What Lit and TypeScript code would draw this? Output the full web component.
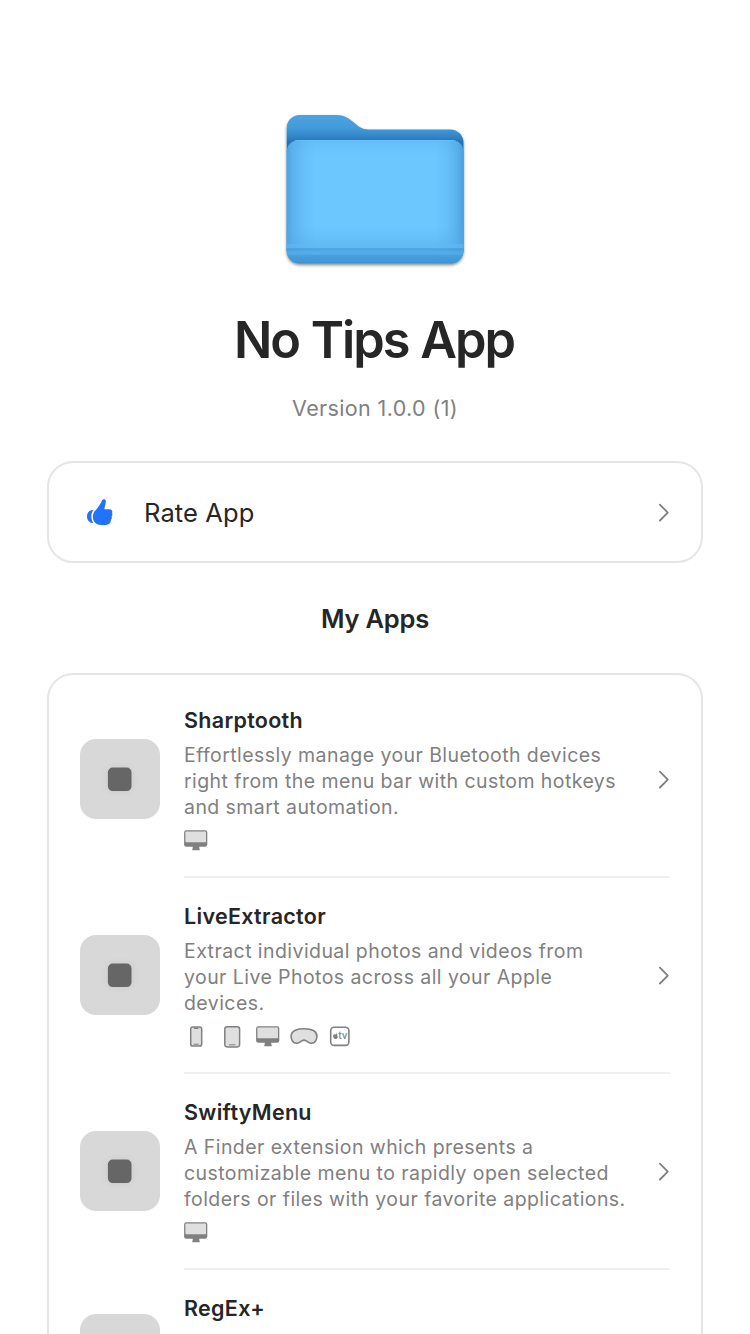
import { LitElement, html, css, svg, nothing } from "lit";
import { customElement, property } from "lit/decorators.js";

type Device = "phone" | "tablet" | "mac" | "vision" | "tv";

interface AppInfo {
  name: string;
  about: string[];
  devices: Device[];
}

const APPS: AppInfo[] = [
  {
    name: "Sharptooth",
    about: [
      "Effortlessly manage your Bluetooth devices",
      "right from the menu bar with custom hotkeys",
      "and smart automation.",
    ],
    devices: ["mac"],
  },
  {
    name: "LiveExtractor",
    about: [
      "Extract individual photos and videos from",
      "your Live Photos across all your Apple",
      "devices.",
    ],
    devices: ["phone", "tablet", "mac", "vision", "tv"],
  },
  {
    name: "SwiftyMenu",
    about: [
      "A Finder extension which presents a",
      "customizable menu to rapidly open selected",
      "folders or files with your favorite applications.",
    ],
    devices: ["mac"],
  },
  { name: "RegEx+", about: [], devices: [] },
];

@customElement("chevron-icon")
export class ChevronIcon extends LitElement {
  static styles = css`
    :host { display: block; width: 12px; height: 20px; flex: none; }
    .glyph { display: block; }
  `;
  render() {
    return html`<svg class="glyph" width="12" height="20" viewBox="0 0 12 20" fill="none"
      stroke="#808080" stroke-width="1.8" stroke-linecap="round" stroke-linejoin="round">
      <path d="M1.900 2.700 L9.800 10.600 L1.900 18.500" />
    </svg>`;
  }
}

@customElement("folder-icon")
export class FolderIcon extends LitElement {
  static styles = css`
    :host { display: block; width: 200px; height: 170px; }
    .glyph { display: block; }
  `;
  render() {
    return html`<svg class="glyph" width="200" height="170" viewBox="275 105 200 170">
      <defs>
        <linearGradient id="back" x1="0" y1="115" x2="0" y2="142" gradientUnits="userSpaceOnUse">
          <stop offset="0" stop-color="#4ba3e0" />
          <stop offset=".5" stop-color="#429ada" />
          <stop offset=".75" stop-color="#348aca" />
          <stop offset="1" stop-color="#2672b9" />
        </linearGradient>
        <linearGradient id="side" x1="286.7" y1="0" x2="463.5" y2="0" gradientUnits="userSpaceOnUse">
          <stop offset="0" stop-color="#4ba5e3" />
          <stop offset=".035" stop-color="#5ab3ef" />
          <stop offset=".1" stop-color="#66c0fa" />
          <stop offset=".17" stop-color="#6cc6ff" />
          <stop offset=".84" stop-color="#6cc6ff" />
          <stop offset=".91" stop-color="#65bff9" />
          <stop offset=".965" stop-color="#58b1ed" />
          <stop offset="1" stop-color="#48a1df" />
        </linearGradient>
        <linearGradient id="fall" x1="0" y1="140" x2="0" y2="263.5" gradientUnits="userSpaceOnUse">
          <stop offset="0" stop-color="#4faae6" stop-opacity=".3" />
          <stop offset=".12" stop-color="#4faae6" stop-opacity="0" />
          <stop offset=".7" stop-color="#4faae6" stop-opacity="0" />
          <stop offset=".84" stop-color="#4faae6" stop-opacity=".35" />
          <stop offset="1" stop-color="#4faae6" stop-opacity=".45" />
        </linearGradient>
        <linearGradient id="foot" x1="0" y1="254.5" x2="0" y2="263.5" gradientUnits="userSpaceOnUse">
          <stop offset="0" stop-color="#48a0dc" />
          <stop offset="1" stop-color="#3d94d3" />
        </linearGradient>
        <clipPath id="front">
          <path d="M298.700 140H451.500A12 12 0 0 1 463.500 152V250.500A13 13 0 0 1 450.500 263.500H299.700A13 13 0 0 1 286.700 250.500V152A12 12 0 0 1 298.700 140Z" />
        </clipPath>
        <filter id="shade" x="-10%" y="-10%" width="120%" height="125%">
          <feDropShadow dx="0" dy="1.6" stdDeviation="1.5" flood-color="#000" flood-opacity=".48" />
        </filter>
      </defs>
      <g filter="url(#shade)">
        <path fill="url(#back)" d="M299.700 115H337C344 115 348.500 118 353 121.800C358 126.300 362 129.500 369 129.500H450.500A13 13 0 0 1 463.500 142.500V250.500A13 13 0 0 1 450.500 263.500H299.700A13 13 0 0 1 286.700 250.500V128A13 13 0 0 1 299.700 115Z" />
      </g>
      <g clip-path="url(#front)">
        <rect x="286" y="139" width="178" height="126" fill="url(#side)" />
        <rect x="286" y="139" width="178" height="126" fill="url(#fall)" />
        <rect x="286" y="140" width="178" height="1" fill="#6bc2f9" opacity=".8" />
        <rect x="286" y="244" width="178" height="4" fill="#62b8f1" opacity=".6" />
        <rect x="286" y="248" width="178" height="3" fill="#469edd" opacity=".7" />
        <rect x="286" y="251" width="178" height="4" fill="#51a9e5" opacity=".8" />
        <rect x="286" y="254.700" width="178" height="9" fill="url(#foot)" />
      </g>
    </svg>`;
  }
}

const deviceShapes = {
  phone: svg`<rect x="6.700" y="2.900" width="11" height="19.200" rx="2.200" fill="#dfdfdf" stroke="#808080" stroke-width="1.500"/>
    <path d="M10.500 4.300H13.900" stroke="#808080" stroke-width="1.300" stroke-linecap="round"/>
    <path d="M10.100 20.200H14.300" stroke="#808080" stroke-width="1" stroke-linecap="round"/>`,
  tablet: svg`<rect x="4.800" y="2.700" width="14.800" height="20.200" rx="2.300" fill="#dfdfdf" stroke="#808080" stroke-width="1.500"/>
    <path d="M9.500 20.800H15" stroke="#808080" stroke-width="1" stroke-linecap="round"/>`,
  mac: svg`<path d="M9 18H15L15.800 22.200H8.200Z" fill="#808080"/>
    <rect x=".1" y="2.200" width="23.200" height="16.600" rx="2.200" fill="#808080"/>
    <rect x="1.400" y="3.500" width="20.600" height="10.800" rx=".8" fill="#dfdfdf"/>`,
  vision: svg`<path d="M14 4.800C20 4.800 26.900 5.900 26.900 12.300C26.900 16.200 24.700 19.300 21.600 19.300C18.300 19.300 16.700 16.100 14 16.100C11.300 16.100 9.700 19.300 6.400 19.300C3.300 19.300 1.100 16.200 1.100 12.300C1.100 5.900 8 4.800 14 4.800Z" fill="#dfdfdf" stroke="#808080" stroke-width="1.600"/>`,
  tv: svg`<rect x="2.700" y="3.200" width="18.200" height="18.200" rx="3.400" fill="#fff" stroke="#808080" stroke-width="1.600"/>
    <path d="M7.700 9.800Q7.800 8.700 8.800 8.400Q8.800 9.500 7.700 9.800ZM7.500 10.400Q8.500 9.600 9.700 10.500Q8.500 11.700 9.900 13.100Q8.900 15.500 7.600 14.900Q6.100 15.500 5.300 13.200Q4.500 9.600 7.500 10.400Z" fill="#808080"/>
    <text x="10.600" y="15.200" font-family="Inter, sans-serif" font-size="9.500" fill="#808080" stroke="#808080" stroke-width=".2">tv</text>`,
};

@customElement("device-icon")
export class DeviceIcon extends LitElement {
  @property() kind: Device = "mac";
  static styles = css`
    :host { display: block; height: 24px; }
    .glyph { display: block; }
  `;
  render() {
    const w = this.kind === "vision" ? 28 : 24;
    return html`<svg class="glyph" width=${w} height="24" viewBox="0 0 ${w} 24">${deviceShapes[this.kind]}</svg>`;
  }
}

@customElement("app-row")
export class AppRow extends LitElement {
  @property({ attribute: false }) app!: AppInfo;
  static styles = css`
    :host { display: flex; align-items: stretch; padding: 0 31px; gap: 24px; }
    .art {
      flex: none; align-self: center; width: 80px; height: 80px; margin-bottom: 2px;
      border-radius: 16px; background: #d8d8d8;
    }
    .mark { display: block; }
    .body {
      flex: 1; display: flex; align-items: center; justify-content: space-between;
      padding: 24px 0; border-bottom: 2px solid #f0f0f0;
    }
    .text { display: flex; flex-direction: column; }
    .name {
      font-size: 21.5px; line-height: 28px; font-weight: 580;
      letter-spacing: 0.3px; color: #262626; white-space: nowrap;
    }
    .about {
      margin-top: 8px; min-height: 52px; font-size: 19.5px; line-height: 26px;
      letter-spacing: 0.43px; color: #808080;
    }
    .line { white-space: nowrap; }
    .devices { display: flex; gap: 12px; height: 24px; margin-top: 8px; }
    .vision { margin: 0 -2px; }
  `;
  render() {
    const { name, about, devices } = this.app;
    return html`
      <div class="art">
        <svg class="mark" width="80" height="80" viewBox="0 0 80 80">
          <defs>
            <filter id="halo" x="-60%" y="-60%" width="220%" height="220%">
              <feDropShadow dx="0" dy="0" stdDeviation="3" flood-color="#000" flood-opacity=".08" />
            </filter>
          </defs>
          <rect x="27.900" y="28.500" width="23.600" height="23.600" rx="4.800" fill="#666" filter="url(#halo)" />
        </svg>
      </div>
      <div class="body">
        <div class="text">
          <div class="name">${name}</div>
          <div class="about">${about.map((l) => html`<div class="line">${l}</div>`)}</div>
          <div class="devices">
            ${devices.map((d) => html`<device-icon class=${d === "vision" ? "vision" : nothing} .kind=${d}></device-icon>`)}
          </div>
        </div>
        <chevron-icon></chevron-icon>
      </div>`;
  }
}

@customElement("app-root")
export class AppRoot extends LitElement {
  static styles = css`
    :host {
      display: flex; flex-direction: column; align-items: center;
      box-sizing: border-box; width: 750px; height: 1334px; overflow: hidden;
      padding-top: 105px; background: #fff; color: #262626;
      font-family: Inter, "Liberation Sans", sans-serif;
    }
    .title {
      margin: 33px 0 0; font-size: 50.5px; line-height: 64px; font-weight: 570;
      letter-spacing: -2px; word-spacing: 1px; text-indent: -2px; white-space: nowrap;
    }
    .version {
      margin-top: 22px; font-size: 21.5px; line-height: 28px; color: #808080;
      letter-spacing: 0.37px;
    }
    .card {
      box-sizing: border-box; width: 656px; flex: none;
      border: 2px solid #e5e5e5; border-radius: 26px;
    }
    .rate {
      margin-top: 39px; height: 102px; padding: 0 31px 0 37px;
      display: flex; align-items: center;
    }
    .thumb { display: block; flex: none; }
    .label { flex: 1; margin-left: 30px; font-size: 25.5px; letter-spacing: 0.1px; }
    .heading {
      margin: 38px 0 0; font-size: 25.5px; line-height: 36px; font-weight: 580;
      letter-spacing: -0.25px;
    }
    .apps { margin-top: 36px; padding-top: 7px; }
  `;
  render() {
    return html`
      <folder-icon></folder-icon>
      <h1 class="title">No Tips App</h1>
      <div class="version">Version 1.0.0 (1)</div>
      <div class="card rate">
        <svg class="thumb" width="28" height="28" viewBox="0 0 28 28" fill="#2272fb">
          <path d="M7.500 12C5.800 14 5.200 16.200 5.300 18.700C5.400 21.200 6 23 7.300 24.900C3.700 25.300 1 22.300 1 18.500C1 14.700 3.500 11.700 7.500 12Z" />
          <path d="M15.800 2.900C16.900 .8 19.600 .9 19.800 3C20 5.400 18.500 8.600 18.400 11.300H23.500C26.200 11.300 26.700 13.600 26 15C26.700 16.200 26.500 17.800 25.600 18.700C26.100 20.100 25.600 21.400 24.800 22C25.100 25.400 22.600 27 18.500 27C13.500 27 10 26.600 8.100 23.500C6.100 20.200 6.600 15.300 9.300 12.500C12.400 9.300 13.800 6.500 15.800 2.900Z" />
        </svg>
        <div class="label">Rate App</div>
        <chevron-icon></chevron-icon>
      </div>
      <h2 class="heading">My Apps</h2>
      <div class="card apps">${APPS.map((a) => html`<app-row .app=${a}></app-row>`)}</div>
    `;
  }
}
